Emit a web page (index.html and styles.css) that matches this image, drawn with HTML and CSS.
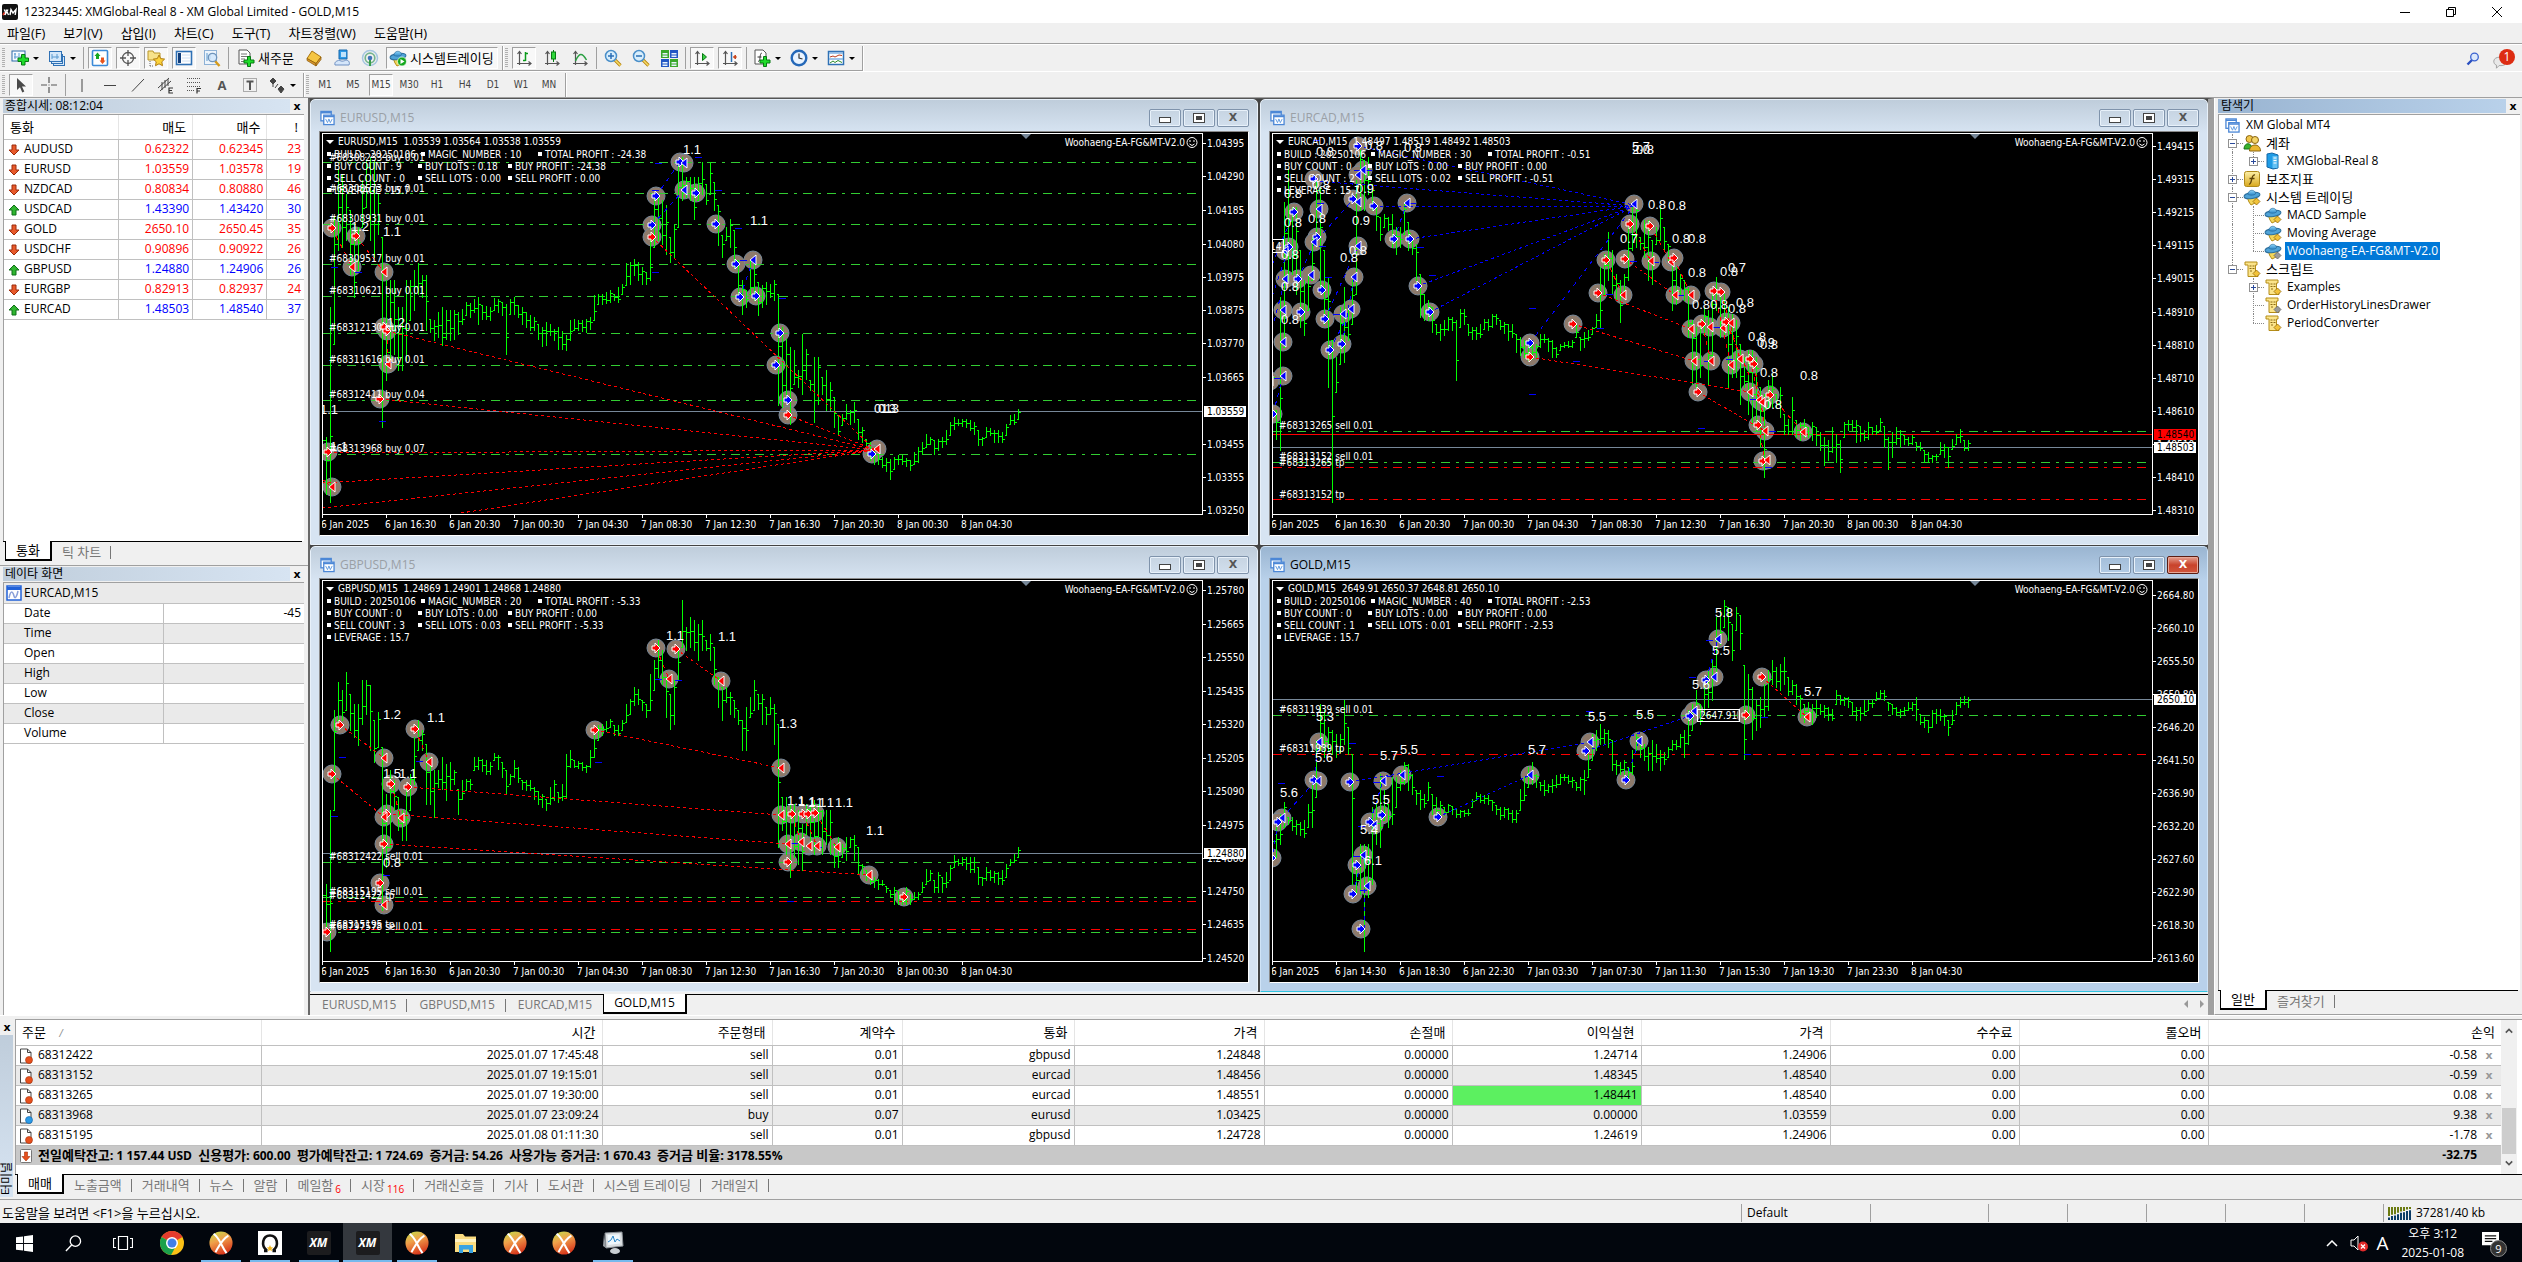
FILE: index.html
```html
<!DOCTYPE html>
<html lang="ko">
<head>
<meta charset="utf-8">
<title>12323445: XMGlobal-Real 8 - XM Global Limited - GOLD,M15</title>
<link rel="stylesheet" href="styles.css">
</head>
<body>
<svg class="defs" aria-hidden="true">
  <defs>
    <linearGradient id="g-gold" x1="0" y1="0" x2="0" y2="1"><stop offset="0" stop-color="#fdf0a8"/><stop offset="1" stop-color="#d9a81c"/></linearGradient>
    <linearGradient id="g-blue" x1="0" y1="0" x2="0" y2="1"><stop offset="0" stop-color="#8fd4f7"/><stop offset="1" stop-color="#2a86c8"/></linearGradient>
    <linearGradient id="g-ball" x1=".2" y1="0" x2=".6" y2="1"><stop offset="0" stop-color="#c5d84a"/><stop offset=".4" stop-color="#f0a04a"/><stop offset="1" stop-color="#d6321a"/></linearGradient>
  </defs>
  <symbol id="i-newchart" viewBox="0 0 18 18"><rect x="1" y="2" width="13" height="10" fill="#f4f9ff" stroke="#2c6aa8"/><path d="M4 4v6M3 5h2M3 8h8M8 4v3" stroke="#5b9ad0" fill="none"/><path d="M10.500 5.500h3.500v3.500h3.500v3.500h-3.500v3.500h-3.500v-3.500h-3.500v-3.500h3.500z" fill="#1fdc2a" stroke="#067a12"/></symbol>
  <symbol id="i-profiles" viewBox="0 0 18 18"><g stroke="#2f71b5" fill="#d5e8fa"><rect x="5.500" y="7.500" width="11" height="9"/><rect x="3.500" y="5.500" width="11" height="9"/><rect x="1.500" y="2.500" width="12" height="10"/></g><path d="M4 5v5M4 8h7M9 5v5" stroke="#5b9ad0" fill="none"/></symbol>
  <symbol id="i-market" viewBox="0 0 18 18"><rect x="1.500" y="1.500" width="15" height="15" rx="1" fill="#fff" stroke="#3b8ad8" stroke-width="1.600"/><path d="M6.500 3.500l3 3.500H8v3H5V7H3.500z" fill="#17a81f"/><path d="M11.500 15l-3-3.500H10v-3h3v3h1.500z" fill="#e8541c"/></symbol>
  <symbol id="i-target" viewBox="0 0 18 18"><g stroke="#555" fill="none" stroke-width="1.300"><circle cx="9" cy="9" r="5.500"/><path d="M9 1v6M9 11v6M1 9h6M11 9h6"/></g></symbol>
  <symbol id="i-star" viewBox="0 0 18 18"><path d="M1 2h5l1 2h6v7H1z" fill="#f7e28a" stroke="#b9962a"/><path d="M3 12v5M3 17h4" stroke="#666" stroke-dasharray="1 1" fill="none"/><path d="M12 6l1.700 3.600 3.900.5-2.800 2.700.7 3.900-3.500-1.900-3.500 1.900.7-3.900L6.400 10.100l3.900-.5z" fill="#fbd23a" stroke="#b07d10"/></symbol>
  <symbol id="i-list" viewBox="0 0 18 18"><rect x="1.500" y="2.500" width="15" height="13" fill="#fff" stroke="#2f71b5" stroke-width="1.600"/><path d="M3 4h3v10H3z" fill="#123e7a"/><path d="M7 6h8M7 9h8M7 12h8" stroke="#cfe0f2"/></symbol>
  <symbol id="i-tester" viewBox="0 0 18 18"><rect x="1.500" y="1.500" width="12" height="14" fill="#eef5fc" stroke="#8fb2d6"/><path d="M4 4v8M7 5v5" stroke="#5b9ad0"/><path d="M12 12l4.500 5" stroke="#d69b1c" stroke-width="2.500"/><circle cx="9.500" cy="8.500" r="4.200" fill="#cfe6fb" fill-opacity=".8" stroke="#6f94bb" stroke-width="1.300"/></symbol>
  <symbol id="i-neworder" viewBox="0 0 18 18"><path d="M2 1h8l3 3v11H2z" fill="#fff" stroke="#555"/><path d="M4 5h6M4 7.500h7M4 10h4M4 12.500h3" stroke="#777"/><path d="M10.500 7.500h3v3.500h3.500v3h-3.500v3.500h-3v-3.500H7v-3h3.500z" fill="#1fdc2a" stroke="#067a12"/></symbol>
  <symbol id="i-book" viewBox="0 0 18 18"><path d="M7 2l9 6-5 6.500L2 9.500z" fill="#f5c542" stroke="#a9730d"/><path d="M2 9.500v2L11 17v-2.500zM11 17l5-6.500V8l-5 6.500z" fill="#d9962a" stroke="#8a5a08" stroke-width=".7"/></symbol>
  <symbol id="i-person" viewBox="0 0 18 18"><path d="M6 1h8v9H6z" fill="#2d9be8" stroke="#1669ad"/><path d="M8 3h5v5H8z" fill="#bfe3fb"/><path d="M2 16c-1-4 3-4 4-5 3 2 5 1 7 0 3 0 4 3 3 5z" fill="#d5e6fa" stroke="#6d8fc2"/></symbol>
  <symbol id="i-signal" viewBox="0 0 18 18"><g fill="none"><circle cx="9" cy="9" r="7.500" stroke="#a5c6e0" stroke-width="1.500"/><circle cx="9" cy="9" r="4.800" stroke="#74b48e" stroke-width="1.700"/><path d="M9 9v8" stroke="#3a9e4a" stroke-width="2"/></g><circle cx="9" cy="9" r="2.300" fill="#3f74b8"/></symbol>
  <symbol id="i-expert" viewBox="0 0 18 18"><path d="M4 9l10 0-2 6-4 2-2-3z" fill="#f3d65a" stroke="#b58d18"/><ellipse cx="9" cy="7.500" rx="8" ry="3" fill="#4fa3d8" stroke="#2b6f9e" transform="rotate(-8 9 7.500)"/><path d="M5 6.500C5 1 12.500 1 12.500 6c-2 1.500-5 1.500-7.500.5z" fill="url(#g-blue)" stroke="#2b6f9e" stroke-width=".7"/></symbol>
  <symbol id="i-autotrade" viewBox="0 0 18 18"><use href="#i-expert"/><circle cx="13" cy="12.500" r="4.500" fill="#15a81f" stroke="#fff" stroke-width=".7"/><path d="M11.500 10v5l4-2.500z" fill="#fff"/></symbol>
  <symbol id="axes" viewBox="0 0 18 18"><path d="M4.500 3v13M2.500 5l2-2.500 2 2.500M2 14.500h14M13.500 12.500l2.500 2-2.500 2" fill="none" stroke="#555" stroke-width="1.200"/></symbol>
  <symbol id="i-bars" viewBox="0 0 18 18"><use href="#axes"/><path d="M10.500 3v9M8 11.500h2.500M10.500 4.500H13" stroke="#0a9a1a" stroke-width="1.500" fill="none"/></symbol>
  <symbol id="i-candle" viewBox="0 0 18 18"><use href="#axes"/><path d="M10.500 1v12" stroke="#067a12"/><rect x="8.500" y="3" width="4" height="7" fill="#2fd83a" stroke="#067a12"/></symbol>
  <symbol id="i-line" viewBox="0 0 18 18"><use href="#axes"/><path d="M4.500 12C8 4 11 3 15.500 11" stroke="#2ba043" stroke-width="1.500" fill="none"/></symbol>
  <symbol id="lens" viewBox="0 0 18 18"><path d="M11 11l5.500 5.500" stroke="#b8860f" stroke-width="3.200"/><path d="M11 11l5.500 5.500" stroke="#f7dc6a" stroke-width="1.500"/><circle cx="7" cy="7" r="5.500" fill="#d8eefc" stroke="#4a8fc9" stroke-width="1.500"/></symbol>
  <symbol id="i-zoomin" viewBox="0 0 18 18"><use href="#lens"/><path d="M7 4v6M4 7h6" stroke="#2b6fb5" stroke-width="1.500"/></symbol>
  <symbol id="i-zoomout" viewBox="0 0 18 18"><use href="#lens"/><path d="M4 7h6" stroke="#2b6fb5" stroke-width="1.500"/></symbol>
  <symbol id="i-tile" viewBox="0 0 18 18"><path d="M1 1h8v8H1zM10 10h8v8h-8z" fill="#3aa82a"/><path d="M10 1h8v8h-8zM1 10h8v8H1z" fill="#2257c4"/><path d="M2.500 4h5v1.500h-5zM2.500 6.500h5V8h-5zM11.500 4h5v1.500h-5zM11.500 6.500h5V8h-5zM2.500 13h5v1.500h-5zM2.500 15.500h5V17h-5zM11.500 13h5v1.500h-5zM11.500 15.500h5V17h-5z" fill="#e6f2fb"/></symbol>
  <symbol id="i-autoscroll" viewBox="0 0 18 18"><use href="#axes"/><path d="M9.500 4.500v7l4-3.500z" fill="#3bcf45" stroke="#067a12"/></symbol>
  <symbol id="i-shift" viewBox="0 0 18 18"><use href="#axes"/><path d="M10.500 3v10" stroke="#2b6fb5" stroke-width="1.500"/><path d="M16 8h-3.500M14.500 6L12.500 8l2 2z" fill="#c8451c" stroke="#c8451c"/></symbol>
  <symbol id="i-indicator" viewBox="0 0 18 18"><path d="M2 1h8l3 3v11H2z" fill="#fff" stroke="#555"/><path d="M5 12c3 2 1-8 4-8M4.500 8h4" stroke="#333" fill="none"/><path d="M10.500 7.500h3v3.500h3.500v3h-3.500v3.500h-3v-3.500H7v-3h3.500z" fill="#1fdc2a" stroke="#067a12"/></symbol>
  <symbol id="i-clock" viewBox="0 0 18 18"><circle cx="9" cy="9" r="7.300" fill="#eaf4ff" stroke="#2468b8" stroke-width="2.400"/><path d="M9 4.500V9l3.500 1" stroke="#333" fill="none" stroke-width="1.200"/></symbol>
  <symbol id="i-template" viewBox="0 0 18 18"><rect x="1.500" y="2.500" width="15" height="13" fill="#fff" stroke="#2f71b5" stroke-width="1.500"/><path d="M2 4h14M2 10h14" stroke="#7fb2e2" stroke-width="1.500"/><path d="M3 8l3-1 2 1 4-2 3 .5" stroke="#b83a1c" fill="none"/><path d="M3 14l3-2 2 1.500 3-2 4 2" stroke="#2a8a2a" fill="none"/></symbol>
  <symbol id="i-cursor" viewBox="0 0 18 18"><path d="M5 2v12l3-2.800 2.300 5.300 2-.9-2.300-5.100H14z" fill="#4a4a4a"/></symbol>
  <symbol id="i-cross" viewBox="0 0 18 18"><path d="M9 1v6M9 11v6M1 9h6M11 9h6" stroke="#555" stroke-width="1.200"/><path d="M9 8.500v1" stroke="#555"/></symbol>
  <symbol id="i-vline" viewBox="0 0 18 18"><path d="M9 3v13" stroke="#444"/></symbol>
  <symbol id="i-hline" viewBox="0 0 18 18"><path d="M3 9.500h12" stroke="#444"/></symbol>
  <symbol id="i-trend" viewBox="0 0 18 18"><path d="M3 15.500L15 3" stroke="#444"/></symbol>
  <symbol id="i-channel" viewBox="0 0 18 18"><path d="M1 12L12 2M3 15L14 5M5 6v8M8 4v8M11 3v7" stroke="#444" fill="none"/><path d="M16 12h-4v5h4M12 14.500h3" stroke="#333" fill="none" stroke-width="1.200"/></symbol>
  <symbol id="i-fibo" viewBox="0 0 18 18"><path d="M2 2.500h14M2 6.500h14M2 10.500h14M2 14.500h8" stroke="#555" stroke-dasharray="1 1"/><path d="M12 17.500v-5h4M12 15h3" stroke="#333" fill="none" stroke-width="1.200"/></symbol>
  <symbol id="i-label" viewBox="0 0 18 18"><rect x="2.500" y="2.500" width="13" height="13" fill="none" stroke="#666" stroke-dasharray="1 1"/><path d="M5.500 5.500h7M9 5v9" stroke="#555" stroke-width="2"/></symbol>
  <symbol id="i-shapes" viewBox="0 0 18 18"><path d="M5 2l3 3-3 3-3-3zM13 10l3 3-3 4-3-4z" fill="#444" stroke="#444"/><path d="M5 8v3M7 12l3-4" stroke="#444" fill="none"/></symbol>
  <symbol id="i-chartwin" viewBox="0 0 16 16"><g fill="#fff" stroke="#4b87d6" stroke-width="1.400"><rect x="1" y="1" width="11" height="10"/><rect x="4" y="5" width="11" height="10"/></g><path d="M1 2.500h11M4 6.500h11" stroke="#4b87d6" stroke-width="1.600"/><path d="M6 9l2 4 1.500-4 1.500 4 2-4" stroke="#5f9ae0" fill="none"/></symbol>
  <symbol id="i-datawin" viewBox="0 0 16 16"><rect x="1" y="1" width="14" height="14" fill="#fff" stroke="#2262d8" stroke-width="1.500"/><path d="M1 2h14v3H1z" fill="#2262d8"/><path d="M3 13c2-9 4-6 5-2s3 0 4-5" stroke="#8a9fd8" stroke-width="1.500" fill="none"/></symbol>
  <symbol id="i-up" viewBox="0 0 12 12"><path d="M6 1l5 5H8v5H4V6H1z" fill="#2fb52f" stroke="#0f6e18"/></symbol>
  <symbol id="i-down" viewBox="0 0 12 12"><path d="M6 11l5-5H8V1H4v5H1z" fill="#e8592a" stroke="#9c2c0c"/></symbol>
  <symbol id="i-accounts" viewBox="0 0 18 18"><circle cx="6.500" cy="5" r="3.500" fill="#f0c64a" stroke="#8a6410"/><circle cx="12" cy="6" r="3.500" fill="#f3d468" stroke="#8a6410"/><path d="M1 15c0-7 8-7 8 0z" fill="#38b32c" stroke="#14701a"/><path d="M6.500 17c0-8 11-8 11 0z" fill="#eab82f" stroke="#8a6410"/></symbol>
  <symbol id="i-server" viewBox="0 0 18 18"><path d="M3 2l5-1 6 2v13l-5 1-6-2z" fill="#1f9ce6" stroke="#1266a6"/><path d="M8.500 4h5v12h-5z" fill="#62c1f5"/><path d="M9.500 6h3M9.500 8.500h3M9.500 11h3" stroke="#fff"/></symbol>
  <symbol id="i-func" viewBox="0 0 18 18"><rect x="1.500" y="1.500" width="15" height="15" rx="2" fill="url(#g-gold)" stroke="#b08a1a"/><path d="M6 14c3 1 2-10 6-9M6.500 8.500h5" stroke="#5c4208" stroke-width="1.300" fill="none"/></symbol>
  <symbol id="i-ea" viewBox="0 0 18 18"><use href="#i-expert"/><path d="M13.500 10l3.500 3.500-3.500 3.500-3.500-3.500z" fill="#f2c33a" stroke="#94690a" stroke-width=".8"/></symbol>
  <symbol id="i-eagray" viewBox="0 0 18 18"><use href="#i-expert"/><path d="M13.500 10l3.500 3.500-3.500 3.500-3.500-3.500z" fill="#9a9a9a" stroke="#666" stroke-width=".8"/></symbol>
  <symbol id="i-scroll" viewBox="0 0 18 18"><path d="M2 2h12v3h-1.500v9H15v2.500H5V5H2z" fill="#fbe48a" stroke="#b58d18"/><path d="M6.500 6h5M6.500 8.500h5M7 11h3" stroke="#8a6a14" stroke-dasharray="2 1"/></symbol>
  <symbol id="i-script" viewBox="0 0 18 18"><use href="#i-scroll"/><path d="M13.500 10l3.500 3.500-3.500 3.500-3.500-3.500z" fill="#f2c33a" stroke="#94690a" stroke-width=".8"/></symbol>
  <symbol id="i-scriptgray" viewBox="0 0 18 18"><use href="#i-scroll"/><path d="M13.500 10l3.500 3.500-3.500 3.500-3.500-3.500z" fill="#9a9a9a" stroke="#666" stroke-width=".8"/></symbol>
  <symbol id="page" viewBox="0 0 14 16"><path d="M1.500 1h7l3.500 3.500V15H1.500z" fill="#fff" stroke="#444"/><path d="M8.500 1v3.500H12" fill="none" stroke="#444"/></symbol>
  <symbol id="i-sell" viewBox="0 0 14 16"><use href="#page"/><circle cx="10" cy="12" r="3.500" fill="#e8501c" stroke="#a5300a" stroke-width=".6"/></symbol>
  <symbol id="i-buy" viewBox="0 0 14 16"><use href="#page"/><circle cx="10" cy="12" r="3.500" fill="#2a9be8" stroke="#0f5fa5" stroke-width=".6"/></symbol>
  <symbol id="i-total" viewBox="0 0 14 16"><rect x="1.500" y="1.500" width="11" height="13" rx="1" fill="#fff" stroke="#777"/><path d="M7 13l4-4.500H8.500V4h-3v4.500H3z" fill="#e8501c" stroke="#a5300a" stroke-width=".6"/></symbol>
  <symbol id="i-ball" viewBox="0 0 26 26"><circle cx="13" cy="13" r="12.500" fill="url(#g-ball)"/><path d="M5 3c7 5 8 13 14 21M21 5c-7 4-10 11-14 18" stroke="#fff" stroke-width="2.200" fill="none"/></symbol>
</svg>

<div class="app">
  <header class="titlebar">
    <svg class="applogo" viewBox="0 0 16 16"><rect width="16" height="16" rx="2" fill="#111"/><path d="M1.500 11l2-3-1.300-2.500M3 11l3-5.500M4 5.500L6.500 11" stroke="#fff" stroke-width="1.300" fill="none"/><path d="M1 11l1.500-2.500" stroke="#e0301c" stroke-width="1.500"/><path d="M8 11l1-5.500L11 9l3-3.500-.8 5.500" stroke="#fff" stroke-width="1.400" fill="none"/></svg>
    <h1>12323445: XMGlobal-Real 8 - XM Global Limited - GOLD,M15</h1>
    <div class="sysbuttons">
      <button aria-label="최소화"><svg viewBox="0 0 10 10"><path d="M0 5.500h10"/></svg></button>
      <button aria-label="이전 크기로"><svg viewBox="0 0 10 10"><path d="M.5 2.500h7v7h-7zM2.500 2.500v-2h7v7h-2"/></svg></button>
      <button aria-label="닫기"><svg viewBox="0 0 10 10"><path d="M0 0l10 10M10 0L0 10"/></svg></button>
    </div>
  </header>

  <nav class="menubar ko">
    <button>파일(F)</button><button>보기(V)</button><button>삽입(I)</button><button>차트(C)</button><button>도구(T)</button><button>차트정렬(W)</button><button>도움말(H)</button>
  </nav>

  <div class="toolrow">
    <div class="toolbar">
      <i class="grip"></i>
      <button class="tb dd" aria-label="새 차트"><svg><use href="#i-newchart"/></svg></button>
      <button class="tb dd" aria-label="프로파일"><svg><use href="#i-profiles"/></svg></button>
      <i class="sep"></i>
      <button class="tb on" aria-label="종합시세"><svg><use href="#i-market"/></svg></button>
      <button class="tb on" aria-label="데이타 화면"><svg><use href="#i-target"/></svg></button>
      <button class="tb on" aria-label="탐색기"><svg><use href="#i-star"/></svg></button>
      <button class="tb on" aria-label="터미널"><svg><use href="#i-list"/></svg></button>
      <button class="tb" aria-label="테스터"><svg><use href="#i-tester"/></svg></button>
      <i class="sep"></i>
      <button class="tb wide order ko"><svg><use href="#i-neworder"/></svg>새주문</button>
      <button class="tb" aria-label="편집기"><svg><use href="#i-book"/></svg></button>
      <button class="tb" aria-label="커뮤니티"><svg><use href="#i-person"/></svg></button>
      <button class="tb" aria-label="신호"><svg><use href="#i-signal"/></svg></button>
      <button class="tb wide auto on ko"><svg><use href="#i-autotrade"/></svg>시스템트레이딩</button>
    </div>
    <div class="toolbar">
      <i class="grip"></i>
      <button class="tb on" aria-label="바 차트"><svg><use href="#i-bars"/></svg></button>
      <button class="tb" aria-label="캔들"><svg><use href="#i-candle"/></svg></button>
      <button class="tb" aria-label="라인"><svg><use href="#i-line"/></svg></button>
      <i class="sep"></i>
      <button class="tb" aria-label="확대"><svg><use href="#i-zoomin"/></svg></button>
      <button class="tb" aria-label="축소"><svg><use href="#i-zoomout"/></svg></button>
      <button class="tb" aria-label="타일"><svg><use href="#i-tile"/></svg></button>
      <i class="sep"></i>
      <button class="tb on" aria-label="자동 스크롤"><svg><use href="#i-autoscroll"/></svg></button>
      <button class="tb on" aria-label="차트 이동"><svg><use href="#i-shift"/></svg></button>
      <i class="sep"></i>
      <button class="tb dd" aria-label="보조지표"><svg><use href="#i-indicator"/></svg></button>
      <button class="tb dd" aria-label="주기"><svg><use href="#i-clock"/></svg></button>
      <button class="tb dd" aria-label="템플릿"><svg><use href="#i-template"/></svg></button>
    </div>
    <div class="toolend">
      <svg class="find" viewBox="0 0 14 14"><path d="M1.500 12.500L6 8" stroke="#2a4fc0" stroke-width="2.400"/><circle cx="8.500" cy="5" r="3.800" fill="#dbe8fb" stroke="#3a62d0" stroke-width="1.300"/></svg>
      <span class="alert"><svg viewBox="0 0 18 18"><path d="M2 8c0-6 14-6 14 0s-6 5-8 5l-3 3v-3.500C3 12 2 10 2 8z" fill="#e8e8e8" stroke="#999"/></svg><b>1</b></span>
    </div>
  </div>
  <div class="toolrow second">
    <div class="toolbar">
      <i class="grip"></i>
      <button class="tb on" aria-label="커서"><svg><use href="#i-cursor"/></svg></button>
      <button class="tb" aria-label="십자선"><svg><use href="#i-cross"/></svg></button>
      <i class="sep"></i>
      <button class="tb" aria-label="수직선"><svg><use href="#i-vline"/></svg></button>
      <button class="tb" aria-label="수평선"><svg><use href="#i-hline"/></svg></button>
      <button class="tb" aria-label="추세선"><svg><use href="#i-trend"/></svg></button>
      <button class="tb" aria-label="채널"><svg><use href="#i-channel"/></svg></button>
      <button class="tb" aria-label="피보나치"><svg><use href="#i-fibo"/></svg></button>
      <button class="tb letter">A</button>
      <button class="tb" aria-label="라벨"><svg><use href="#i-label"/></svg></button>
      <button class="tb dd" aria-label="도형"><svg><use href="#i-shapes"/></svg></button>
    </div>
    <div class="toolbar frames">
      <i class="grip"></i>
      <button class="tb">M1</button><button class="tb">M5</button><button class="tb on">M15</button><button class="tb">M30</button><button class="tb">H1</button><button class="tb">H4</button><button class="tb">D1</button><button class="tb">W1</button><button class="tb">MN</button>
    </div>
  </div>

  <main class="workspace">
    <aside class="left">
      <section class="panel quotes">
        <h2 class="panelhead ko"><span>종합시세: 08:12:04</span><button aria-label="닫기">x</button></h2>
        <div class="panelbody">
          <table class="grid quote">
            <colgroup><col class="q1"><col class="q2"><col class="q2"><col class="q3"></colgroup>
            <thead class="ko"><tr><th>통화</th><th>매도</th><th>매수</th><th>!</th></tr></thead>
            <tbody>
              <tr class="dn"><td><svg><use href="#i-down"/></svg>AUDUSD</td><td>0.62322</td><td>0.62345</td><td>23</td></tr>
              <tr class="dn"><td><svg><use href="#i-down"/></svg>EURUSD</td><td>1.03559</td><td>1.03578</td><td>19</td></tr>
              <tr class="dn"><td><svg><use href="#i-down"/></svg>NZDCAD</td><td>0.80834</td><td>0.80880</td><td>46</td></tr>
              <tr class="up"><td><svg><use href="#i-up"/></svg>USDCAD</td><td>1.43390</td><td>1.43420</td><td>30</td></tr>
              <tr class="dn"><td><svg><use href="#i-down"/></svg>GOLD</td><td>2650.10</td><td>2650.45</td><td>35</td></tr>
              <tr class="dn"><td><svg><use href="#i-down"/></svg>USDCHF</td><td>0.90896</td><td>0.90922</td><td>26</td></tr>
              <tr class="up"><td><svg><use href="#i-up"/></svg>GBPUSD</td><td>1.24880</td><td>1.24906</td><td>26</td></tr>
              <tr class="dn"><td><svg><use href="#i-down"/></svg>EURGBP</td><td>0.82913</td><td>0.82937</td><td>24</td></tr>
              <tr class="up"><td><svg><use href="#i-up"/></svg>EURCAD</td><td>1.48503</td><td>1.48540</td><td>37</td></tr>
            </tbody>
          </table>
        </div>
        <div class="tabs ko"><button class="active">통화</button><button>틱 차트</button></div>
      </section>
      <section class="panel data">
        <h2 class="panelhead ko"><span>데이타 화면</span><button aria-label="닫기">x</button></h2>
        <div class="panelbody">
          <table class="grid datawin">
            <colgroup><col class="d1"><col class="d2"></colgroup>
            <tbody>
              <tr><td colspan="2" class="symbol"><svg><use href="#i-datawin"/></svg>EURCAD,M15</td></tr>
              <tr><td>Date</td><td>-45</td></tr>
              <tr><td>Time</td><td></td></tr>
              <tr><td>Open</td><td></td></tr>
              <tr><td>High</td><td></td></tr>
              <tr><td>Low</td><td></td></tr>
              <tr><td>Close</td><td></td></tr>
              <tr><td>Volume</td><td></td></tr>
            </tbody>
          </table>
        </div>
      </section>
    </aside>

    <section class="mdi">
      <div class="windows">
        <article class="win">
          <header><svg class="ico"><use href="#i-chartwin"/></svg><h3>EURUSD,M15</h3><button class="min" aria-label="최소화"></button><button class="max" aria-label="최대화"></button><button class="cls" aria-label="닫기">X</button></header>
          <div class="chart" data-chart="eurusd"></div>
        </article>
        <article class="win">
          <header><svg class="ico"><use href="#i-chartwin"/></svg><h3>EURCAD,M15</h3><button class="min" aria-label="최소화"></button><button class="max" aria-label="최대화"></button><button class="cls" aria-label="닫기">X</button></header>
          <div class="chart" data-chart="eurcad"></div>
        </article>
        <article class="win">
          <header><svg class="ico"><use href="#i-chartwin"/></svg><h3>GBPUSD,M15</h3><button class="min" aria-label="최소화"></button><button class="max" aria-label="최대화"></button><button class="cls" aria-label="닫기">X</button></header>
          <div class="chart" data-chart="gbpusd"></div>
        </article>
        <article class="win current">
          <header><svg class="ico"><use href="#i-chartwin"/></svg><h3>GOLD,M15</h3><button class="min" aria-label="최소화"></button><button class="max" aria-label="최대화"></button><button class="cls" aria-label="닫기">X</button></header>
          <div class="chart" data-chart="gold"></div>
        </article>
      </div>
      <div class="tabs charttabs"><button>EURUSD,M15</button><button>GBPUSD,M15</button><button class="plain">EURCAD,M15</button><button class="active">GOLD,M15</button><span class="scrollers"><i></i><i class="r"></i></span></div>
    </section>

    <aside class="right">
      <section class="panel nav">
        <h2 class="panelhead ko"><span>탐색기</span><button aria-label="닫기">x</button></h2>
        <div class="panelbody">
          <ul class="tree">
            <li class="root"><svg><use href="#i-chartwin"/></svg><span>XM Global MT4</span></li>
            <li class="l1"><i class="box"></i><i class="dots"></i><svg><use href="#i-accounts"/></svg><span class="ko">계좌</span></li>
            <li class="l2 last"><i class="box plus"></i><i class="dots"></i><svg><use href="#i-server"/></svg><span>XMGlobal-Real 8</span></li>
            <li class="l1"><i class="box plus"></i><i class="dots"></i><svg><use href="#i-func"/></svg><span class="ko">보조지표</span></li>
            <li class="l1"><i class="box"></i><i class="dots"></i><svg><use href="#i-ea"/></svg><span class="ko">시스템 트레이딩</span></li>
            <li class="l2"><i class="dots long"></i><svg><use href="#i-ea"/></svg><span>MACD Sample</span></li>
            <li class="l2"><i class="dots long"></i><svg><use href="#i-ea"/></svg><span>Moving Average</span></li>
            <li class="l2 last"><i class="dots long"></i><svg><use href="#i-eagray"/></svg><span class="sel">Woohaeng-EA-FG&amp;MT-V2.0</span></li>
            <li class="l1 last"><i class="box"></i><i class="dots"></i><svg><use href="#i-script"/></svg><span class="ko">스크립트</span></li>
            <li class="l2 end"><i class="box plus"></i><i class="dots"></i><svg><use href="#i-script"/></svg><span>Examples</span></li>
            <li class="l2 end"><i class="dots long"></i><svg><use href="#i-scriptgray"/></svg><span>OrderHistoryLinesDrawer</span></li>
            <li class="l2 end last"><i class="dots long"></i><svg><use href="#i-script"/></svg><span>PeriodConverter</span></li>
          </ul>
        </div>
        <div class="tabs ko"><button class="active">일반</button><button>즐겨찾기</button></div>
      </section>
    </aside>
  </main>

  <section class="terminal">
    <div class="strip"><button aria-label="닫기">x</button><span class="ko">터미널</span></div>
    <div class="termmain">
      <div class="termscroll">
        <table class="grid orders">
          <colgroup><col class="c1"><col class="c2"><col class="c3"><col class="c4"><col class="c5"><col class="c6"><col class="c7"><col class="c8"><col class="c8"><col class="c8"><col class="c8"><col class="c9"></colgroup>
          <thead class="ko"><tr><th>주문 <em>/</em></th><th>시간</th><th>주문형태</th><th>계약수</th><th>통화</th><th>가격</th><th>손절매</th><th>이익실현</th><th>가격</th><th>수수료</th><th>롤오버</th><th>손익</th></tr></thead>
          <tbody>
            <tr><td><svg><use href="#i-sell"/></svg>68312422</td><td>2025.01.07 17:45:48</td><td>sell</td><td>0.01</td><td>gbpusd</td><td>1.24848</td><td>0.00000</td><td>1.24714</td><td>1.24906</td><td>0.00</td><td>0.00</td><td>-0.58<button aria-label="청산">x</button></td></tr>
            <tr><td><svg><use href="#i-sell"/></svg>68313152</td><td>2025.01.07 19:15:01</td><td>sell</td><td>0.01</td><td>eurcad</td><td>1.48456</td><td>0.00000</td><td>1.48345</td><td>1.48540</td><td>0.00</td><td>0.00</td><td>-0.59<button aria-label="청산">x</button></td></tr>
            <tr><td><svg><use href="#i-sell"/></svg>68313265</td><td>2025.01.07 19:30:00</td><td>sell</td><td>0.01</td><td>eurcad</td><td>1.48551</td><td>0.00000</td><td class="near">1.48441</td><td>1.48540</td><td>0.00</td><td>0.00</td><td>0.08<button aria-label="청산">x</button></td></tr>
            <tr><td><svg><use href="#i-buy"/></svg>68313968</td><td>2025.01.07 23:09:24</td><td>buy</td><td>0.07</td><td>eurusd</td><td>1.03425</td><td>0.00000</td><td>0.00000</td><td>1.03559</td><td>0.00</td><td>0.00</td><td>9.38<button aria-label="청산">x</button></td></tr>
            <tr><td><svg><use href="#i-sell"/></svg>68315195</td><td>2025.01.08 01:11:30</td><td>sell</td><td>0.01</td><td>gbpusd</td><td>1.24728</td><td>0.00000</td><td>1.24619</td><td>1.24906</td><td>0.00</td><td>0.00</td><td>-1.78<button aria-label="청산">x</button></td></tr>
          </tbody>
          <tfoot><tr><td colspan="11"><svg><use href="#i-total"/></svg><span class="ko">전일예탁잔고:</span> 1 157.44 USD&nbsp; <span class="ko">신용평가:</span> 600.00&nbsp; <span class="ko">평가예탁잔고:</span> 1 724.69&nbsp; <span class="ko">증거금:</span> 54.26&nbsp; <span class="ko">사용가능 증거금:</span> 1 670.43&nbsp; <span class="ko">증거금 비율:</span> 3178.55%</td><td>-32.75</td></tr></tfoot>
        </table>
        <div class="scrollbar"><svg viewBox="0 0 10 6"><path d="M1 5l4-4 4 4"/></svg><i></i><svg viewBox="0 0 10 6"><path d="M1 1l4 4 4-4"/></svg></div>
      </div>
      <div class="tabs termtabs ko"><button class="active">매매</button><button>노출금액</button><button>거래내역</button><button>뉴스</button><button>알람</button><button>메일함<sub>6</sub></button><button>시장<sub>116</sub></button><button>거래신호들</button><button>기사</button><button>도서관</button><button>시스템 트레이딩</button><button>거래일지</button></div>
    </div>
  </section>

  <footer class="status">
    <span class="help ko">도움말을 보려면 &lt;F1&gt;을 누르십시오.</span>
    <span class="s1">Default</span><span class="s2"></span><span class="s3"></span><span class="s3"></span><span class="s3"></span><span class="s3"></span><span class="s3"></span>
    <span class="net"><svg viewBox="0 0 24 20" preserveAspectRatio="none"><path d="M1 0v14M4 0v12M7 0v11M10 0v9M13 0v7M16 0v6M19 0v4M22 0v3" stroke="#6b7a10" stroke-width="2"/><path d="M1 16v4M4 14v6M7 13v7M10 11v9M13 9v11M16 8v12M19 6v14M22 5v15" stroke="#0b3c66" stroke-width="2"/></svg>37281/40 kb</span>
  </footer>

  <footer class="taskbar">
    <button class="task" aria-label="시작"><svg class="i18" viewBox="0 0 18 18"><path d="M0 2.500l7.500-1v7H0zM8.500 1.300L18 0v8.500H8.500zM0 9.500h7.500v7L0 15.500zM8.500 9.500H18V18l-9.500-1.300z" fill="#fff"/></svg></button>
    <button class="task" aria-label="검색"><svg class="i18" viewBox="0 0 18 18"><circle cx="11" cy="6.500" r="5.500" fill="none" stroke="#fff" stroke-width="1.400"/><path d="M7 10.500L1 17" stroke="#fff" stroke-width="1.500"/></svg></button>
    <button class="task" aria-label="작업 보기"><svg class="i20" viewBox="0 0 20 16"><path d="M5.500 1.500h9v13h-9zM3 3.500H.5v9H3M17 3.500h2.500v9H17" fill="none" stroke="#fff" stroke-width="1.200"/></svg></button>
    <button class="task" aria-label="Chrome"><svg class="i24" viewBox="0 0 24 24"><circle cx="12" cy="12" r="12" fill="#fbc116"/><path d="M12 12L1.600 6A12 12 0 0 1 22.400 6z" fill="#e33b2e"/><path d="M12 12L1.600 6A12 12 0 0 0 11 24l5-9z" fill="#1ba14c"/><circle cx="12" cy="12" r="6" fill="#fff"/><circle cx="12" cy="12" r="4.500" fill="#3f7fe8"/></svg></button>
    <button class="task run" aria-label="MetaTrader"><svg class="i24"><use href="#i-ball"/></svg></button>
    <button class="task run" aria-label="OANDA"><svg class="i24" viewBox="0 0 24 24"><path d="M0 0h24v24H0z" fill="#fff"/><path d="M9 19.500C2.500 15 4.500 4.500 12 4.500s9.500 10.500 3 15M6 20h3.500M14.500 20H18" stroke="#111" stroke-width="2.600" fill="none"/><path d="M12 14l1 2.200 2.200.2-1.700 1.500.5 2.300-2-1.200-2 1.200.5-2.300-1.700-1.500 2.200-.2z" fill="#f5b81c"/></svg></button>
    <button class="task run"><span class="xm">XM</span></button>
    <button class="task run cur"><span class="xm">XM</span></button>
    <button class="task run" aria-label="MetaTrader"><svg class="i24"><use href="#i-ball"/></svg></button>
    <button class="task" aria-label="파일 탐색기"><svg class="i24" viewBox="0 0 24 24"><path d="M1 3h8l2 2.500h11V21H1z" fill="#fbdc80"/><path d="M1 8h21v3H1z" fill="#fff3c4"/><path d="M5 14h14v8h-4v-3.500H9V22H5z" fill="#3aa3e3"/></svg></button>
    <button class="task" aria-label="MetaTrader"><svg class="i24"><use href="#i-ball"/></svg></button>
    <button class="task" aria-label="MetaTrader"><svg class="i24"><use href="#i-ball"/></svg></button>
    <button class="task run" aria-label="모니터"><svg class="i24" viewBox="0 0 24 24"><path d="M4 2l17-1 1 14-17 2z" fill="#d9dde0" stroke="#8a9096"/><path d="M6.500 4l12-.7.8 9.200-12 1.500z" fill="#eef6fb"/><path d="M7 11l3-2 2-4 2 6 2-3 3 2" fill="none" stroke="#2b86c8"/><ellipse cx="14" cy="20" rx="5" ry="3" fill="#c8cdd1"/><path d="M3 3l2 14-3-2z" fill="#9aa0a6"/></svg></button>
    <div class="tray">
      <svg class="chev" viewBox="0 0 12 7"><path d="M1 6l5-5 5 5" fill="none" stroke="#fff" stroke-width="1.500"/></svg>
      <svg class="vol" viewBox="0 0 18 18"><path d="M1 6h3l4-4v14l-4-4H1z" fill="none" stroke="#fff"/><circle cx="13" cy="12.500" r="5" fill="#e02a2a"/><path d="M11 10.500l4 4M15 10.500l-4 4" stroke="#fff" stroke-width="1.300"/></svg>
      <span class="ime">A</span>
      <time class="ko"><span>오후 3:12</span><span>2025-01-08</span></time>
      <span class="note"><svg viewBox="0 0 18 18"><path d="M0 0h18v14h-5v4l-4-4H0z" fill="#fff"/><path d="M3 4h12M3 7h12M3 10h8" stroke="#111" stroke-width="1.300"/></svg><b>9</b></span>
    </div>
  </footer>
</div>
<script src="charts.js"></script>
</body>
</html>
```
FILE: styles.css
```css
* { box-sizing: border-box; }

body {
  margin: 0;
  background: #f0f0f0;
  color: #000;
  font: 12px/18px "Open Sans", "Noto Sans CJK KR", sans-serif;
}

h1, h2, h3, ul { margin: 0; padding: 0; font-size: inherit; font-weight: normal; }
button { margin: 0; padding: 0; border: 0; background: none; color: inherit; font: inherit; }
svg { display: block; flex: none; }
.defs { position: absolute; width: 0; height: 0; }
.ko { font-size: 13px; }

.app { display: flex; flex-direction: column; min-height: 100vh; }

/* title bar and menu */
.titlebar { display: flex; align-items: center; height: 23px; background: #fff; }
.applogo { width: 16px; height: 16px; margin: 0 6px 0 2px; }
.titlebar h1 { flex: 1; }
.sysbuttons { display: flex; margin-right: 2px; }
.sysbuttons button { display: grid; place-items: center; width: 46px; height: 23px; }
.sysbuttons svg { width: 10px; height: 10px; fill: none; stroke: #000; }
.menubar { display: flex; height: 21px; border-bottom: 1px solid #a0a0a0; }
.menubar button { padding: 0 11px 0 7px; line-height: 18px; }

/* toolbars */
.toolrow { display: flex; height: 27px; padding-top: 1px; border-top: 1px solid #fff; }
.toolbar { display: flex; align-items: center; gap: 4px; padding: 0 4px 0 2px; border-right: 1px solid #a0a0a0; border-bottom: 1px solid #a0a0a0; box-shadow: 1px 0 #fff; }
.second { height: 26px; }
.second .toolbar { border-bottom: 0; }
.grip { width: 3px; height: 20px; background: repeating-linear-gradient(#b0b0b0 0 1px, #f0f0f0 1px 2px); }
.sep { width: 1px; height: 22px; background: #a0a0a0; }
.tb { position: relative; display: flex; align-items: center; justify-content: center; width: 24px; height: 22px; }
.tb svg { width: 18px; height: 18px; }
.tb.dd { width: 33px; justify-content: flex-start; padding-left: 2px; }
.tb.dd::after { content: ""; margin-left: 4px; border: 3px solid transparent; border-top-color: #000; border-bottom: 0; }
.tb.on { background: #f8f8f8; border: 1px solid #fff; border-top-color: #a0a0a0; border-left-color: #a0a0a0; }
.tb.wide { justify-content: flex-start; gap: 3px; padding-left: 4px; white-space: nowrap; }
.order { width: 65px; }
.auto { width: 112px; }
.tb.auto { padding-left: 2px; }
.letter { font-weight: bold; font-size: 13px; color: #555; }
.frames .tb { font: 10px/12px "DejaVu Sans Condensed", "DejaVu Sans", sans-serif; color: #444; }
.toolend { display: flex; flex: 1; justify-content: flex-end; align-items: center; gap: 12px; padding-right: 6px; }
.find { width: 14px; height: 14px; }
.alert { position: relative; width: 24px; height: 20px; }
.alert svg { width: 16px; height: 16px; margin-top: 5px; }
.alert b { position: absolute; right: 1px; top: 0; width: 16px; height: 16px; border-radius: 50%; background: #dd2c12; color: #fff; font: 12px/16px "Open Sans", sans-serif; text-align: center; }

/* workspace */
.workspace { display: grid; grid-template-columns: 308px minmax(0, 1fr) 308px; flex: 1; border-top: 1px solid #a0a0a0; }
.left, .right { display: flex; flex-direction: column; min-height: 0; }
.panel { display: flex; flex-direction: column; padding: 1px 4px 0 3px; }
.quotes { height: 468px; border-bottom: 1px solid #a0a0a0; }
.data, .nav { flex: 1; }
.panel.nav { padding-right: 2px; }
.right { border-left: 1px solid #fff; border-bottom: 1px solid #a0a0a0; }
.panelhead { display: flex; height: 14px; line-height: 14px; margin-bottom: 1px; }
.panelhead span { flex: 1; background: linear-gradient(90deg, #bfcddb, #d7e4f2); white-space: nowrap; font-size: 12px; padding-left: 2px; }
.panelhead button, .strip button { width: 14px; font: bold 11px/13px "DejaVu Sans", sans-serif; }
.nav .panelhead span { background: linear-gradient(90deg, #99b4d1, #b9d1ea); padding-left: 3px; }
.panelbody { flex: 1; background: #fff; border: 1px solid #a0a0a0; border-bottom: 0; border-right: 0; }

.grid { width: 100%; border-collapse: collapse; table-layout: fixed; }
.grid td, .grid th { height: 20px; padding: 0 3px; border-bottom: 1px solid #c0c0c0; border-right: 1px solid #c0c0c0; text-align: right; font-weight: normal; line-height: 18px; white-space: nowrap; }
.grid td:first-child, .grid th:first-child { text-align: left; }
.grid td:last-child, .grid th:last-child { border-right: 0; }
.grid th { height: 25px; padding: 0 6px; border-right-color: #e5e5e5; }
.grid td svg { float: left; }
.quote th { height: 24px; }
.quote svg { width: 12px; height: 12px; margin: 4px 4px 0 1px; }
.q1 { width: 114px; } .q2 { width: 74px; } .q3 { width: 37px; }
.quote .dn td { color: #f00; } .quote .up td { color: #00f; }
.quote tr td:first-child { color: #000; }
.d1 { width: 159px; } .d2 { width: 141px; }
.datawin tr:nth-child(odd) td { background: #eaeaea; }
.datawin td:first-child { padding-left: 20px; }
.datawin td.symbol { padding-left: 2px; text-align: left; }
.symbol svg { width: 16px; height: 16px; margin: 1px 2px 0 0; }

.tabs { display: flex; height: 24px; border-top: 1px solid #000; color: #777; }
.tabs button { height: 20px; line-height: 18px; padding: 0 10px; white-space: nowrap; position: relative; }
.tabs button::after { content: ""; position: absolute; right: 0; top: 4px; height: 13px; border-right: 1px solid #777; }
.tabs .plain::after, .tabs .active::after { display: none; }
.tabs .active { margin-top: -1px; border: 1px solid #000; border-top: 0; border-right-width: 2px; border-bottom-width: 2px; background: #fff; color: #000; }
.left .tabs, .right .tabs { margin-right: 2px; }
.left .tabs .active, .right .tabs .active { margin-left: 2px; }

/* chart windows */
.mdi { display: flex; flex-direction: column; border-left: 2px solid #696969; border-right: 6px solid #a0a0a0; border-top: 1px solid #555; min-width: 0; }
.windows { display: grid; grid-template-columns: minmax(0, 1fr) minmax(0, 1fr); gap: 1px 2px; background: #444; }
.win { border: 1px solid #e8f1fa; border-radius: 5px 5px 0 0; background: linear-gradient(#bfcddb, #d7e4f2 33px); padding: 0 8px 8px; }
.win header { display: flex; align-items: center; gap: 2px; height: 31px; padding-top: 4px; }
.win .ico { width: 15px; height: 16px; margin: 0 3px 0 1px; }
.win h3 { flex: 1; color: #9aa0a6; font-size: 12px; }
.win header button { width: 32px; height: 18px; border: 1px solid #7f93ab; border-radius: 2px; box-shadow: inset 0 0 0 1px #e8f1fa; font: bold 11px/14px "DejaVu Sans", sans-serif; color: #555; display: grid; place-items: center; }
.win .min::before { content: ""; width: 10px; height: 4px; margin-top: 5px; border: 1px solid #444; background: #fff; }
.win .max::before { content: ""; width: 10px; height: 8px; border: 1px solid #444; background: #444; box-shadow: inset 0 0 0 2px #fff; }
.current { background: linear-gradient(#9ab5d1, #b9d1ea 33px); border-color: #cfe3f7; border-bottom-color: #2fc4e0; }
.current h3 { color: #000; }
.current header .cls { background: linear-gradient(#e5a090, #c9432b 50%, #d0563c); border-color: #5c1d12; box-shadow: inset 0 0 0 1px #e8a898; color: #fff; }
.chart { display: grid; grid-template-columns: minmax(0, 1fr) 44px; grid-template-rows: 382px 20px; padding: 1px 1px 0 2px; background: #000; border: 1px solid #8a8a8a; border-right-color: #fff; border-bottom-color: #fff; font: 10px/12px "DejaVu Sans Condensed", "DejaVu Sans", sans-serif; }
.plot { width: 100%; height: 100%; border: 1px solid #fff; }
.axis { width: 100%; height: 100%; overflow: visible; }
.times { width: 100%; height: 100%; grid-column: 1 / 3; }
.chart text { fill: #fff; white-space: pre; }
.plot .mark { font: 13px "Liberation Sans", sans-serif; }
.plot .ea { text-anchor: end; }
.charttabs { flex: 1; min-height: 20px; margin-top: 2px; }
.charttabs button { padding: 0 11px 0 12px; }
.charttabs .active { padding: 0 10px; }
.scrollers { display: flex; gap: 12px; margin: 5px 4px 0 auto; }
.scrollers i { width: 0; height: 8px; border: 4px solid transparent; border-left: 0; border-right: 4px solid #999; }
.scrollers .r { border-right: 0; border-left: 4px solid #999; }

/* navigator tree */
.tree { list-style: none; padding-top: 1px; }
.tree li { position: relative; display: flex; align-items: center; height: 18px; }
.tree svg { width: 18px; height: 18px; margin-right: 3px; }
.tree span { padding: 0 2px; line-height: 18px; }
.tree .sel { background: #0078d7; color: #fff; }
.tree .root { padding-left: 6px; }
.tree .root svg { width: 15px; height: 15px; margin-right: 4px; }
.tree .l1 { padding-left: 9px; }
.tree .l2 { padding-left: 30px; }
.box { position: relative; z-index: 1; width: 9px; height: 9px; border: 1px solid #919191; background: linear-gradient(#2a4a9a, #2a4a9a) center / 5px 1px no-repeat #fff; }
.box.plus { background: linear-gradient(#2a4a9a, #2a4a9a) center / 5px 1px no-repeat, linear-gradient(#2a4a9a, #2a4a9a) center / 1px 5px no-repeat #fff; }
.dots { width: 6px; border-top: 1px dotted #888; }
.dots.long { margin-left: 4px; width: 11px; }
.tree .l1::before, .tree .l2::before, .tree .l2::after { content: ""; position: absolute; left: 13px; top: 0; height: 18px; border-left: 1px dotted #888; }
.tree .l1.last::before { height: 9px; }
.tree .l2.end::before { display: none; }
.tree .l2::after { left: 34px; }
.tree .l2.last::after { height: 9px; }

/* terminal */
.terminal { display: flex; padding-top: 3px; border-top: 1px solid #fff; border-bottom: 1px solid #a0a0a0; }
.strip { display: flex; flex-direction: column; width: 15px; padding-bottom: 2px; }
.strip button { height: 16px; text-align: center; }
.strip span { flex: 1; width: 13px; background: linear-gradient(#d7e4f2, #bfcddb); writing-mode: vertical-rl; text-orientation: sideways; transform: rotate(180deg); line-height: 13px; font-size: 12px; padding-top: 2px; }
.termmain { flex: 1; min-width: 0; }
.termscroll { display: flex; height: 155px; background: #fff; border-top: 1px solid #a0a0a0; border-left: 1px solid #a0a0a0; }
.orders { flex: 1; align-self: flex-start; }
.orders .c1 { width: 245px; } .orders .c2 { width: 341px; } .orders .c3 { width: 170px; } .orders .c4 { width: 130px; } .orders .c5 { width: 172px; } .orders .c6 { width: 190px; } .orders .c7 { width: 188px; } .orders .c8 { width: 189px; } .orders .c9 { width: 293px; }
.orders svg { width: 14px; height: 16px; margin: 2px 5px 0 0; }
.orders em { margin-left: 10px; color: #888; font-size: 10px; }
.orders tbody tr:nth-child(even) td { background: #eaeaea; }
.orders tbody td.near { background: #5cf060; }
.orders tfoot td { background: #c8c8c8; border: 0; font-weight: bold; }
.orders tfoot td:last-child { padding-right: 24px; }
.orders td button { width: 12px; margin: 0 3px 0 6px; color: #999; font: bold 11px/14px "DejaVu Sans", sans-serif; }
.scrollbar { display: flex; flex-direction: column; align-items: center; width: 16px; margin-right: 5px; padding: 8px 0; background: #f0f0f0; }
.scrollbar svg { width: 8px; height: 6px; fill: none; stroke: #555; stroke-width: 2; }
.scrollbar i { width: 14px; height: 46px; margin: auto 0 6px; background: #cdcdcd; }
.termtabs { height: 25px; }
.termtabs .active { margin-left: 2px; }
.termtabs sub { margin-left: 2px; color: #f00; font-size: 10px; vertical-align: -3px; line-height: 10px; }

/* status bar */
.status { display: flex; height: 23px; padding: 4px 0 1px; }
.status span { border-left: 1px solid #a0a0a0; line-height: 18px; }
.status .help { flex: 1; border: 0; padding-left: 2px; }
.s1 { width: 129px; padding-left: 5px; } .s2 { width: 118px; } .s3 { width: 79px; }
.net { display: flex; width: 139px; gap: 4px; padding-left: 4px; }
.net svg { width: 24px; height: 13px; margin-top: 3px; }

/* taskbar */
.taskbar { display: flex; height: 40px; background: #02060d; color: #fff; }
.task { display: grid; place-items: center; width: 49px; position: relative; }
.task.run::after { content: ""; position: absolute; left: 5px; right: 4px; bottom: 0; height: 3px; background: #76b9ed; }
.task.cur { background: #34383e; }
.task.cur::after { left: 0; right: 0; }
.i18 { width: 17px; height: 17px; } .i20 { width: 20px; height: 16px; } .i24 { width: 24px; height: 24px; }
.xm { width: 24px; height: 24px; border-radius: 2px; background: #1c1c1e; font: italic bold 12px/24px "Open Sans", sans-serif; }
.tray { display: flex; flex: 1; align-items: center; justify-content: flex-end; padding-right: 12px; }
.chev { width: 12px; height: 7px; margin-right: 12px; }
.vol { width: 18px; height: 18px; margin-right: 8px; }
.ime { width: 13px; margin-right: 12px; font: 19px/24px "Open Sans", sans-serif; }
.tray time { display: flex; flex-direction: column; align-items: center; font-size: 12px; line-height: 19px; margin-right: 18px; }
.note { position: relative; width: 28px; height: 22px; }
.note svg { width: 17px; height: 17px; }
.note b { position: absolute; left: 8px; top: 8px; width: 17px; height: 17px; border-radius: 50%; background: #333; border: 1px solid #888; font: 11px/15px "Open Sans", sans-serif; text-align: center; }
```
FILE: charts.js
```js
// Chart data is stored on a grid; kx/3 grid units make one pixel, top is the grid row of the frame.
// bars: x, high, low   marks: kind:x,y (r/b colour, R entry, L exit)   lines: colour:x1,y1,x2,y2
const CHARTS = {
  eurusd: {
    kx: 1.65, top: 118,
    head: "EURUSD,M15  1.03539 1.03564 1.03538 1.03559", info: ["10", "-24.38", "9", "0.18", "-24.38", "0", "0.00", "0.00"],
    times: "6 Jan 2025|6 Jan 16:30|6 Jan 20:30|7 Jan 00:30|7 Jan 04:30|7 Jan 08:30|7 Jan 12:30|7 Jan 16:30|7 Jan 20:30|8 Jan 00:30|8 Jan 04:30",
    axis: "149:1.04395 248:1.04290 349:1.04185 451:1.04080 550:1.03975 649:1.03875 748:1.03770 850:1.03665 1051:1.03455 1150:1.03355 1249:1.03250",
    bid: [952, "1.03559"], shift: 1181,
    levels: "g205 g298 g391 g511 g607 g718 g814 g919 g1081",
    tags: [[190, "#68308233 buy 0.01"], [282, "#68308573 buy 0.01"], [374, "#68308931 buy 0.01"], [494, "#68309517 buy 0.01"], [590, "#68310621 buy 0.01"], [701, "#68312130 buy 0.01"], [797, "#68311616 buy 0.01"], [902, "#68312411 buy 0.04"], [1064, "#68313968 buy 0.07"]],
    bars: "20,1030,1100 27,1030,1200 33,640,1225 40,370,750 47,225,470 54,240,460 60,300,440 67,350,540 73,400,610 80,400,530 87,260,400 93,200,340 100,190,440 106,200,490 113,300,420 119,430,1000 126,560,860 132,560,800 139,560,780 145,640,830 152,640,830 158,560,800 165,560,680 172,530,650 178,508,600 185,545,610 191,545,710 198,675,715 205,680,740 212,655,730 218,640,755 225,650,735 232,650,740 238,650,735 245,655,720 252,645,690 258,625,665 265,628,670 272,615,655 278,610,690 285,635,675 300,640,680 305,612,650 320,625,665 324,630,780 331,615,660 338,610,660 345,635,670 352,640,690 360,665,710 370,670,710 378,690,735 385,700,758 392,685,755 398,690,725 405,705,740 412,700,765 420,725,768 427,680,740 435,675,710 445,680,710 455,675,715 462,670,705 470,605,680 477,600,630 485,600,630 492,590,625 500,600,620 510,580,625 518,570,600 523,508,575 530,505,570 537,495,545 543,505,560 550,520,570 557,535,570 563,420,560 570,300,460 577,300,440 583,320,450 590,335,480 596,430,505 603,390,490 610,200,400 616,190,320 622,250,310 629,250,320 636,250,375 642,250,320 649,205,300 655,270,330 661,205,300 668,265,350 675,335,455 681,425,490 688,400,440 695,375,460 701,410,520 707,500,600 714,560,660 720,590,640 727,500,600 734,500,620 740,565,665 747,575,640 754,565,630 761,570,610 767,560,620 773,600,935 780,700,940 786,735,900 793,760,990 800,770,870 807,830,880 813,720,900 820,765,855 827,860,890 833,790,985 840,790,930 846,850,900 853,830,950 860,865,950 866,910,1000 872,965,1025 879,960,995 886,930,975 892,950,990 899,925,985 906,975,1035 912,1000,1045 919,1035,1060 925,1045,1100 932,1070,1110 940,1080,1110 947,1090,1120 957,1095,1155 962,1090,1125 970,1085,1110 980,1085,1110 988,1100,1128 995,1075,1110 1005,1060,1105 1012,1045,1080 1018,1022,1060 1025,1030,1050 1032,1040,1080 1040,1030,1060 1050,1010,1050 1057,985,1025 1063,970,1005 1070,975,995 1085,975,1000 1095,985,1020 1103,1010,1055 1110,1030,1055 1117,1000,1030 1125,1003,1025 1132,1010,1045 1140,1015,1045 1147,990,1025 1152,965,990 1160,962,990 1169,945,975",
    marks: "rR:36,404 rR:76,427 rL:70,520 rL:123,535 rR:122,700 rR:128,712 rL:129,811 rR:116,915 rR:30,1075 rL:37,1180 bR:571,307 bR:564,394 rR:565,430 bR:611,205 bL:617,207 bL:618,289 bR:637,297 bR:670,390 bR:703,510 bL:731,498 bR:709,609 bR:736,607 bR:775,718 bR:769,813 bR:789,918 rR:789,964 rL:935,1065 bR:927,1080",
    lines: "r:128,712,933,1068 r:116,915,933,1068 r:30,1077,933,1068 r:20,1168,933,1068 r:20,1243,933,1068 r:250,1258,933,1068 r:789,964,933,1068 r:565,430,933,1068 r:36,404,70,520 r:76,427,123,535 r:128,712,129,811 r:20,1155,37,1180 b:571,307,611,205 b:564,394,618,289 b:709,609,731,498",
    dashes: "575,208 640,190 569,290 673,289 707,403 569,536 714,498 779,613 40,520 79,536 129,806 119,982",
    notes: "1.1:615,165 1.1:727,378 1.1:120,413 1.2:68,397 1.2:127,685 1.1:33,1056 1.1:17,945 0.1:931,942 0.3:937,942 1.3:943,942"
  },
  eurcad: {
    kx: 1.6333, top: 118,
    head: "EURCAD,M15  1.48497 1.48519 1.48492 1.48503", info: ["30", "-0.51", "0", "0.00", "0.00", "2", "0.02", "-0.51"],
    times: "6 Jan 2025|6 Jan 16:30|6 Jan 20:30|7 Jan 00:30|7 Jan 04:30|7 Jan 08:30|7 Jan 12:30|7 Jan 16:30|7 Jan 20:30|8 Jan 00:30|8 Jan 04:30",
    axis: "157:1.49415 256:1.49315 355:1.49215 454:1.49115 553:1.49015 655:1.48910 754:1.48810 853:1.48710 952:1.48610 1051:1.48510 1150:1.48410 1249:1.48310",
    bid: [1060, "1.48503"], ask: [1021, "1.48540"], shift: 1169, box: [0, 436, 38, 474, "14"],
    levels: "g1012 g1105 r1120 r1217",
    tags: [[995, "#68313265 sell 0.01"], [1088, "#68313152 sell 0.01"], [1104, "#68313265 tp"], [1200, "#68313152 tp"]],
    bars: "20,830,960 27,950,1035 33,610,1070 40,325,760 46,225,560 53,340,540 60,340,600 67,470,700 73,560,725 80,540,650 86,430,560 93,260,450 100,280,580 106,470,690 112,550,880 118,740,1225 125,790,895 132,640,810 139,580,805 145,650,740 151,560,690 158,260,600 162,170,350 170,200,350 178,190,300 185,270,350 191,330,410 197,370,440 204,360,400 211,370,410 217,360,460 223,400,480 230,400,460 237,330,420 243,385,470 250,430,480 256,450,560 263,540,670 270,600,680 277,620,680 283,640,715 290,690,720 296,690,740 305,670,710 315,670,710 320,680,858 327,645,700 335,645,690 342,690,725 350,700,735 357,690,730 365,675,705 372,675,710 380,660,700 388,660,690 395,680,705 405,690,740 412,690,730 420,720,775 430,740,790 440,740,800 450,750,790 458,720,760 465,720,745 475,740,790 485,760,790 492,750,770 500,745,760 508,740,760 515,690,730 522,730,770 530,715,760 538,710,740 545,700,720 550,660,700 556,520,700 563,480,600 569,415,560 575,470,600 582,540,620 588,560,685 595,540,610 601,400,560 608,340,470 615,320,460 621,430,465 628,380,490 634,380,560 641,440,570 648,400,450 654,340,440 661,400,470 668,450,500 674,500,650 681,520,630 688,540,600 694,560,620 700,580,730 707,680,870 714,700,880 720,680,850 727,640,720 733,650,875 740,600,800 746,550,650 752,600,730 758,600,720 765,640,880 772,660,850 778,680,850 785,750,930 792,790,880 798,770,960 805,770,990 812,790,1010 818,880,1060 824,900,1150 831,860,940 838,840,940 844,900,940 851,880,970 858,960,1020 865,975,1020 870,910,1020 877,980,1030 884,985,1040 891,975,1030 898,1000,1030 905,985,1040 912,1015,1070 921,1030,1115 928,1040,1100 935,1000,1075 947,1040,1135 954,985,1030 961,980,1010 968,978,1010 975,980,1045 985,1010,1040 992,985,1035 1000,1000,1020 1010,990,1020 1016,972,1010 1024,1030,1125 1030,1015,1090 1036,1000,1050 1044,1010,1060 1050,1025,1050 1058,1030,1055 1065,1025,1050 1072,1045,1070 1080,1045,1070 1088,1070,1105 1096,1085,1105 1104,1080,1100 1110,1045,1080 1116,1050,1090 1123,1060,1120 1130,1035,1065 1137,1020,1050 1143,1005,1045 1150,1040,1068 1157,1040,1070",
    marks: "bR:160,156 bL:168,228 bL:161,245 bR:89,255 bR:153,315 bL:161,325 bR:186,336 bL:240,328 bR:56,354 bL:96,345 bR:94,430 bL:89,445 bR:48,460 bL:42,473 bL:161,457 bR:219,435 bR:245,435 bL:42,555 bR:62,555 bL:83,544 bR:101,588 bL:154,549 bL:38,648 bR:68,655 bR:258,577 bR:278,655 bR:107,676 bL:136,661 bL:149,646 bL:38,745 bR:114,768 bR:134,750 bL:38,846 bR:22,960 bL:16,862 bL:612,331 rR:604,390 rR:637,397 rR:565,498 rR:597,495 rL:639,502 rL:672,504 rR:676,492 rR:552,597 rL:593,603 rL:679,604 rL:704,603 rR:742,592 rR:754,594 rR:512,692 rL:704,705 rR:722,690 rL:735,700 rL:757,703 rR:762,686 rL:770,688 bR:441,747 rR:441,790 rL:710,803 rL:737,802 rL:769,813 rL:784,796 rR:800,796 rR:807,812 rR:715,894 rL:801,896 rR:833,904 rL:816,918 rL:821,925 rR:813,994 rL:826,1011 rL:887,1015 rR:822,1103 rL:828,1100",
    lines: "b:186,336,612,337 b:89,262,612,336 b:160,156,612,334 b:245,435,612,338 b:258,577,612,338 b:278,655,612,338 b:441,747,612,338 b:20,515,56,354 b:20,610,48,460 b:114,768,149,646 b:94,440,160,300 b:107,676,161,457 b:134,750,154,549 b:219,435,240,328 b:22,960,38,846 b:62,555,94,430 b:20,710,42,555 r:565,498,593,603 r:604,390,639,502 r:637,397,672,504 r:597,495,679,604 r:676,492,704,603 r:552,597,704,705 r:512,692,710,803 r:441,790,801,896 r:715,894,826,1011 r:742,592,769,813 r:722,690,737,802 r:754,594,784,796 r:833,904,887,1015 r:800,796,816,918 r:762,686,801,850 r:807,812,826,1000 r:813,994,826,1100",
    dashes: "92,140 159,229 177,229 248,328 98,328 102,458 112,549 124,661 28,852 262,460 282,544 445,642 445,901 556,702 571,601 610,502 645,505 686,604 746,701 730,802 517,802 767,796 720,1003 805,916 836,1012 830,1120 823,1217",
    notes: "0.8:92,173 0.8:172,155 0.8:235,160 0.8:85,270 0.9:158,283 0.8:40,298 0.8:79,373 0.9:150,378 0.8:40,384 0.8:131,490 0.8:145,470 0.8:34,480 0.8:34,576 0.8:34,676 5.7:608,158 2.0:608,166 0.8:614,166 0.8:634,331 0.8:667,333 0.7:589,433 0.8:674,433 0.8:700,433 0.8:700,535 0.8:752,533 0.7:765,520 0.8:706,632 0.8:735,632 0.8:778,625 0.8:765,642 0.8:797,727 0.9:812,745 0.8:817,752 0.8:817,835 0.8:883,843 0.8:824,930"
  },
  gbpusd: {
    kx: 1.65, top: 109,
    head: "GBPUSD,M15  1.24869 1.24901 1.24868 1.24880", info: ["20", "-5.33", "0", "0.00", "0.00", "3", "0.03", "-5.33"],
    times: "6 Jan 2025|6 Jan 16:30|6 Jan 20:30|7 Jan 00:30|7 Jan 04:30|7 Jan 08:30|7 Jan 12:30|7 Jan 16:30|7 Jan 20:30|8 Jan 00:30|8 Jan 04:30",
    axis: "139:1.25780 241:1.25665 340:1.25550 442:1.25435 541:1.25320 643:1.25205 742:1.25090 844:1.24975 943:1.24860 1042:1.24750 1141:1.24635 1243:1.24520",
    bid: [928, "1.24880"], shift: 1181,
    levels: "g955 g1060 g1165 r1072 r1157",
    tags: [[938, "#68312422 sell 0.01"], [1043, "#68315195 sell 0.01"], [1055, "#68312422 tp"], [1140, "#68315195 tp"], [1148, "#68797578 sell 0.01"]],
    bars: "20,1045,1100 27,1020,1170 33,800,1222 40,500,800 46,415,530 53,440,530 60,385,500 67,450,560 73,480,580 80,480,605 86,408,540 93,410,510 100,425,620 106,530,655 113,505,610 119,610,1100 126,750,970 132,680,910 139,710,800 146,760,860 152,800,890 158,730,890 165,690,800 172,580,720 178,530,620 185,560,620 191,600,780 198,640,780 205,680,820 212,680,730 218,640,735 225,660,770 232,655,740 238,680,720 245,735,810 252,710,765 258,705,740 265,705,735 272,640,680 280,640,675 288,650,690 295,655,690 305,628,650 312,635,675 318,655,700 325,680,750 332,690,720 338,650,700 345,670,715 352,710,735 360,710,740 370,730,765 380,750,790 388,765,800 395,730,780 402,710,770 410,745,775 418,720,770 424,630,760 430,620,670 438,650,670 448,655,680 456,665,685 463,620,670 470,560,640 477,545,590 484,540,575 492,525,550 500,545,575 508,545,575 515,530,560 523,480,535 530,465,510 537,430,485 543,435,480 550,470,500 557,480,520 563,390,500 570,350,440 576,290,400 583,320,420 590,400,520 597,450,555 602,410,540 608,320,410 615,168,310 621,250,320 628,220,310 635,230,320 641,240,350 648,230,320 654,290,320 661,270,350 668,310,420 674,400,490 681,430,530 688,430,475 694,445,510 700,470,520 707,500,540 714,530,620 720,490,620 727,460,520 734,410,500 740,450,495 747,450,540 754,490,540 760,460,510 767,480,600 773,540,910 780,760,860 786,760,930 793,780,1000 800,780,940 806,800,960 813,840,980 820,780,870 827,790,900 833,770,930 840,780,880 847,800,930 853,800,900 860,800,930 866,900,970 872,880,970 879,900,940 886,880,950 893,880,910 899,875,950 905,910,990 912,960,990 920,980,1010 928,1000,1030 935,1005,1035 945,1010,1025 955,1040,1060 965,1030,1080 975,1050,1080 985,1030,1080 992,1050,1080 1000,1045,1065 1010,1015,1045 1018,975,1020 1025,980,1010 1032,1010,1045 1038,985,1045 1045,1000,1045 1055,965,1010 1063,935,970 1070,945,965 1078,940,965 1087,940,985 1094,940,985 1103,970,1020 1110,1000,1025 1117,970,1010 1125,980,1010 1133,985,1020 1140,980,1020 1147,960,1000 1155,945,965 1162,930,955 1169,910,940",
    marks: "rR:49,544 rR:36,690 rL:123,644 rR:174,555 rL:197,654 rR:134,720 rR:162,729 rR:128,811 rL:123,820 rL:150,823 rR:122,901 rR:116,1017 rL:123,1083 rR:29,1165 rR:471,558 rR:571,312 rR:604,315 rL:592,405 rL:678,411 rL:777,672 rL:777,814 rR:795,811 rR:814,811 rR:822,811 rR:834,808 rL:789,901 rL:811,896 rL:824,906 rL:836,906 rL:869,909 rR:789,954 rL:922,993 rR:980,1059",
    lines: "r:49,544,123,644 r:36,690,123,820 r:174,555,197,654 r:471,558,777,672 r:162,729,777,814 r:128,811,789,901 r:122,901,922,993 r:571,312,592,405 r:604,315,678,411 r:134,720,150,823 r:795,811,811,896 r:814,811,836,906 r:834,808,869,909",
    dashes: "53,640 40,817 475,655 180,652 574,405 608,408 126,994 119,1080 793,1072 984,1157 798,898 838,909",
    notes: "1.1:588,275 1.1:674,278 1.1:193,520 1.2:120,511 1.5:120,688 1.1:147,688 1.3:774,538 1.1:787,768 1.1:806,772 1.1:822,775 1.1:835,775 1.1:866,775 1.1:918,859 0.8:120,955"
  },
  gold: {
    kx: 1.6333, top: 109,
    head: "GOLD,M15  2649.91 2650.37 2648.81 2650.10", info: ["40", "-2.53", "0", "0.00", "0.00", "1", "0.01", "-2.53"],
    times: "6 Jan 2025|6 Jan 14:30|6 Jan 18:30|6 Jan 22:30|7 Jan 03:30|7 Jan 07:30|7 Jan 11:30|7 Jan 15:30|7 Jan 19:30|7 Jan 23:30|8 Jan 04:30",
    axis: "154:2664.80 253:2660.10 352:2655.50 450:2650.80 550:2646.20 649:2641.50 748:2636.90 847:2632.20 946:2627.60 1045:2622.90 1144:2618.30 1243:2613.60",
    bid: [466, "2650.10"], shift: 1169, box: [714, 497, 782, 533, "2647.91"],
    levels: "g514 r631",
    tags: [[496, "#68311939 sell 0.01"], [613, "#68311939 tp"]],
    bars: "20,880,960 27,850,940 33,810,900 40,775,850 47,820,840 53,820,860 60,830,870 67,835,875 73,830,880 80,780,850 86,720,850 93,590,760 99,480,620 106,500,640 112,550,620 119,560,630 125,570,640 132,570,625 138,470,600 145,550,630 151,630,1020 158,950,1050 164,900,1050 170,900,1222 177,900,1060 184,790,1020 190,780,900 197,690,910 204,740,830 210,780,850 217,700,840 223,700,790 230,680,740 236,655,720 243,660,740 250,690,750 256,740,780 262,740,795 269,750,790 275,715,770 282,750,810 290,760,810 300,790,815 310,780,805 320,795,820 330,800,820 340,795,815 347,765,790 355,745,770 362,750,775 370,755,780 378,770,800 386,785,810 394,790,825 402,790,820 410,800,835 418,800,835 424,735,800 431,700,770 438,670,730 444,655,720 451,690,730 458,715,740 465,710,755 472,720,745 478,705,745 485,695,730 492,690,720 500,690,710 508,700,730 515,715,740 523,700,740 530,680,750 537,630,700 543,570,650 550,560,620 556,540,600 563,555,600 569,560,610 576,590,680 583,650,690 590,655,690 596,650,690 602,670,710 608,620,690 615,570,620 621,590,640 628,600,650 634,610,680 641,590,680 648,600,655 655,620,680 661,625,660 668,610,640 675,590,620 682,590,615 688,570,610 694,560,640 700,500,600 707,480,560 713,440,510 720,480,540 727,420,510 733,380,490 740,350,470 746,220,400 752,200,300 758,168,250 765,190,290 771,240,350 778,190,260 785,215,315 792,365,645 798,390,520 804,430,585 811,470,560 817,460,550 824,420,520 830,380,500 836,350,420 843,370,430 850,360,440 856,340,420 863,400,455 870,410,450 876,420,480 883,455,520 890,480,535 897,475,520 904,480,540 911,470,520 918,480,510 925,490,530 932,495,530 938,500,535 941,440,480 948,455,480 955,460,485 962,460,490 970,475,515 977,490,530 984,470,515 992,470,500 1000,465,490 1008,445,470 1014,440,465 1021,440,470 1028,475,500 1035,480,510 1042,490,515 1048,495,520 1055,490,510 1062,475,500 1070,460,530 1078,510,540 1085,520,550 1092,530,565 1100,500,550 1108,495,530 1116,510,545 1124,530,575 1132,500,540 1138,475,510 1145,460,490 1151,458,480 1157,460,490",
    marks: "bL:97,595 bR:89,709 bL:95,713 bR:147,714 bL:201,713 bL:233,695 bL:36,823 bR:29,834 bR:20,942 bR:199,813 bR:180,834 bL:186,845 bR:291,819 bL:168,933 bR:159,964 bL:175,1026 bR:153,1050 bR:166,1155 bL:442,695 bL:540,595 bR:533,621 bR:598,709 bL:619,591 bR:703,516 bL:709,502 bL:749,286 bL:742,400 bR:729,408 rR:820,400 rR:794,514 rL:893,520",
    lines: "b:147,714,540,595 b:291,819,442,695 b:533,621,703,516 b:36,823,97,700 b:598,709,619,591 b:170,1155,170,1026 b:29,834,20,942 b:180,834,201,713 b:729,408,749,286 b:153,1050,168,933 b:89,709,97,595 r:820,400,893,520",
    dashes: "34,717 151,598 190,714 208,696 295,696 157,937 168,1040 165,847 706,400 734,290 538,502 796,631 824,520",
    notes: "5.8:744,205 5.5:738,319 5.6:706,420 5.7:889,442 5.5:614,511 5.5:536,517 5.7:438,615 5.5:229,616 5.7:196,634 5.3:92,516 5.6:90,640 5.6:33,745 5.5:183,766 5.4:163,857 6.1:170,949"
  }
};

const COLOR = { r: "#ff0000", b: "#0000ff", g: "#32cd32" };

function drawChart(host, c) {
  const X = v => Math.round((v - 20) / c.kx) - 1, Y = v => Math.round((v - c.top) / 3) - 1;
  const list = s => s.split(" ").map(p => p.split(",").map(Number));
  const keyed = s => s.split(" ").map(p => { const [k, v] = p.split(":"); return [k, ...v.split(",").map(Number)]; });
  let s = "";

  for (const [, x, y] of keyed(c.marks)) s += `<circle cx="${X(x)}" cy="${Y(y)}" r="9" fill="#8d7a6b" stroke="#778899"/>`;

  for (const l of c.levels.split(" ")) {
    const y = Y(+l.slice(1)) + 0.5;
    s += `<line x1="0" x2="100%" y1="${y}" y2="${y}" stroke="${COLOR[l[0]]}" stroke-dasharray="9 6 3 6"/>`;
  }
  if (c.ask) s += `<line x1="0" x2="100%" y1="${Y(c.ask[0]) + 0.5}" y2="${Y(c.ask[0]) + 0.5}" stroke="#f00"/>`;
  s += `<line x1="0" x2="100%" y1="${Y(c.bid[0]) + 0.5}" y2="${Y(c.bid[0]) + 0.5}" stroke="#778899"/>`;

  // one bar every four pixels, interpolated between the stored ranges
  const pts = list(c.bars);
  let d = "", close = null;
  for (let i = 0; i <= 174; i++) {
    const gx = 20 + i * 4 * c.kx;
    let j = pts.findIndex(p => p[0] >= gx);
    if (j < 0) j = pts.length - 1;
    const b = pts[j], a = pts[Math.max(0, j - 1)];
    const near = Math.abs(b[0] - gx) < Math.abs(a[0] - gx) ? b : a;
    const t = b[0] === a[0] ? 0 : Math.min(1, (gx - a[0]) / (b[0] - a[0]));
    const exact = Math.abs(near[0] - gx) < 3.4;
    const hi = Y(exact ? near[1] : a[1] + (b[1] - a[1]) * t), lo = Y(exact ? near[2] : a[2] + (b[2] - a[2]) * t);
    const x = i * 4 - 1, r = (i * 37 % 11) / 11;
    const open = Math.min(lo, Math.max(hi, close ?? Math.round((hi + lo) / 2)));
    close = Math.round(hi + (lo - hi) * (0.15 + 0.7 * r));
    d += `M${x + 0.5} ${hi}V${lo + 1}M${x - 1} ${open + 0.5}h1M${x + 1} ${close + 0.5}h2`;
  }
  s += `<path d="${d}" stroke="#00ff00" fill="none" shape-rendering="crispEdges"/>`;

  for (const [k, x1, y1, x2, y2] of keyed(c.lines)) {
    const steep = Math.abs(Y(y2) - Y(y1)) > Math.abs(X(x2) - X(x1));
    s += `<line x1="${X(x1)}" y1="${Y(y1)}" x2="${X(x2)}" y2="${Y(y2)}" stroke="${COLOR[k]}" stroke-dasharray="${steep ? "4 5" : "3 3"}" shape-rendering="crispEdges"/>`;
  }
  for (const [x, y] of list(c.dashes)) s += `<path d="M${X(x) - 3} ${Y(y) + 0.5}h7" stroke="#00f"/>`;
  for (const [k, x, y] of keyed(c.marks)) {
    const shape = k[1] === "R" ? "M-4-2h3v-3l5 5-5 5v-3h-3z" : "M3-5v10l-6-5z";
    s += `<path transform="translate(${X(x)} ${Y(y)})" d="${shape}" fill="${COLOR[k[0]]}" stroke="#fff"/>`;
  }

  for (const [y, t] of c.tags) s += `<text x="6" y="${Y(y) + 4}">${t}</text>`;
  for (const [k, x, y] of keyed(c.notes)) s += `<text class="mark" x="${X(x)}" y="${Y(y) + 5}">${k}</text>`;
  if (c.box) {
    const [x1, y1, x2, y2, t] = c.box, x = x1 ? X(x1) : -6;
    s += `<rect x="${x + 0.5}" y="${Y(y1) + 0.5}" width="${X(x2) - x}" height="${Y(y2) - Y(y1)}" fill="none" stroke="#fff"/><text x="${x + 3}" y="${Y(y2) - 2}">${t}</text>`;
  }

  const n = c.info;
  const cells = [
    [20, 5, `BUILD : 20250106`], [20, 99, `MAGIC_NUMBER : ${n[0]}`], [20, 216, `TOTAL PROFIT : ${n[1]}`],
    [32, 5, `BUY COUNT : ${n[2]}`], [32, 96, `BUY LOTS : ${n[3]}`], [32, 186, `BUY PROFIT : ${n[4]}`],
    [44, 5, `SELL COUNT : ${n[5]}`], [44, 96, `SELL LOTS : ${n[6]}`], [44, 186, `SELL PROFIT : ${n[7]}`],
    [56, 5, `LEVERAGE : 15.7`]];
  s += `<path d="M3 6h8l-4 4z" fill="#fff"/><text x="15" y="11">${c.head}</text>`;
  for (const [y, x, t] of cells) s += `<path d="M${x - 1} ${y - 2}h4v4h-4z" fill="#fff"/><text x="${x + 6}" y="${y + 4}">${t}</text>`;
  s += `<path d="M${X(c.shift) - 5} 0h10l-5 5z" fill="#778899"/>`;
  s += `<svg x="100%" overflow="visible"><text class="ea" x="-17" y="12">Woohaeng-EA-FG&amp;MT-V2.0</text><g fill="none" stroke="#fff"><circle cx="-10" cy="8.500" r="5"/><path d="M-12.500 10q2.500 3 5 0M-12 6v2M-8 6v2"/></g></svg>`;

  let axis = "";
  const price = (y, t, bg, fg) => `<rect x="1" y="${Y(y) - 4}" width="42" height="11" fill="${bg}"/><text x="4" y="${Y(y) + 5}" style="fill:${fg}">${t}</text>`;
  for (const p of c.axis.split(" ")) {
    const [y, t] = p.split(":");
    axis += `<path d="M0 ${Y(y) + 1.5}h3" stroke="#fff"/><text x="4" y="${Y(y) + 5}">${t}</text>`;
  }
  if (c.ask) axis += price(c.ask[0], c.ask[1], "#f00", "#000");
  axis += price(c.bid[0], c.bid[1], "#fff", "#000");

  let times = "";
  c.times.split("|").forEach((t, i) => times += `<path d="M${i * 64 + 0.5} 0v3" stroke="#fff"/><text x="${i * 64 - 1}" y="13">${t}</text>`);

  host.innerHTML = `<svg class="plot">${s}</svg><svg class="axis">${axis}</svg><svg class="times">${times}</svg>`;
}

document.querySelectorAll(".chart").forEach(el => drawChart(el, CHARTS[el.dataset.chart]));
```
